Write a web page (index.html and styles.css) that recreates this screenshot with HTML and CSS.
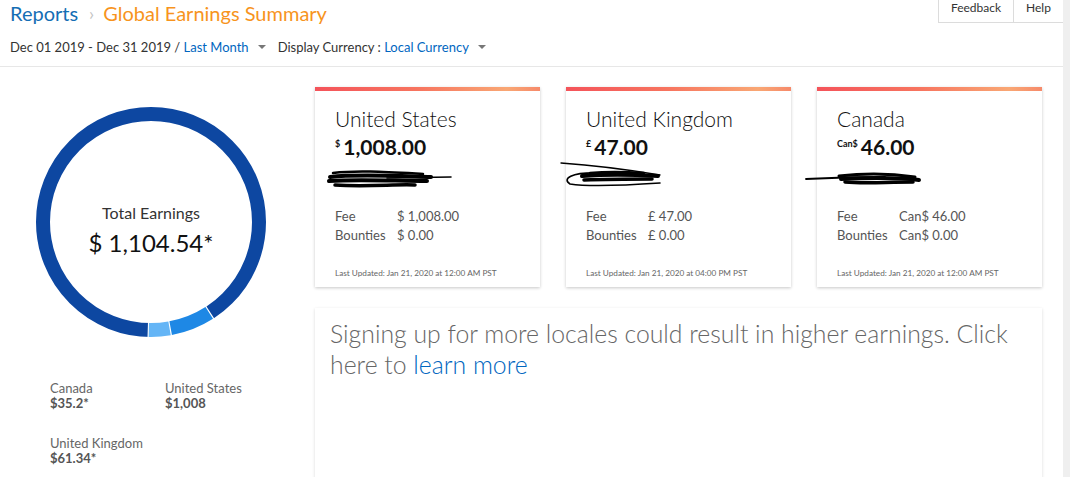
FILE: index.html
```html
<!DOCTYPE html>
<html>
  <head>
    <title>Global Earnings Summary</title>
    <link rel="stylesheet" href="styles.css">
  </head>
  <body>
    <div class="page">
      <header class="topbar">
        <div class="titles">
          <h1 class="crumbs">
            <a class="crumb-link" href="#">Reports</a>
            <span class="crumb-sep">&rsaquo;</span>
            <span class="crumb-current">Global Earnings Summary</span>
          </h1>
          <div class="filters">
            <span class="filter">Dec 01 2019 - Dec 31 2019 / <a href="#">Last Month</a><span class="caret"></span></span>
            <span class="filter">Display Currency : <a href="#">Local Currency</a><span class="caret"></span></span>
          </div>
        </div>
        <nav class="help-links">
          <a href="#">Feedback</a>
          <a href="#">Help</a>
        </nav>
      </header>

      <main class="content">
        <section class="summary">
          <div class="donut">
            <svg width="230" height="230" viewBox="0 0 230 230">
              <g transform="rotate(-90 115 115)" fill="none" stroke-width="14">
                <!-- US is the base ring, white cut for the small locales -->
                <circle cx="115" cy="115" r="108" stroke="#0d47a1" />
                <circle cx="115" cy="115" r="108" stroke="#fff" stroke-width="16" stroke-dasharray="66 700" stroke-dashoffset="-276.3" />
                <circle cx="115" cy="115" r="108" stroke="#1e88e5" stroke-dasharray="41.7 700" stroke-dashoffset="-277.5" />
                <circle cx="115" cy="115" r="108" stroke="#64b5f6" stroke-dasharray="20.9 700" stroke-dashoffset="-320.3" />
              </g>
            </svg>
            <div class="donut-label">
              <span class="donut-title">Total Earnings</span>
              <span class="donut-total">$ 1,104.54*</span>
            </div>
          </div>
          <ul class="legend">
            <li><span>Canada</span><b>$35.2*</b></li>
            <li><span>United States</span><b>$1,008</b></li>
            <li><span>United Kingdom</span><b>$61.34*</b></li>
          </ul>
        </section>

        <section class="locales">
          <div class="cards">
            <div class="card">
              <h2 class="card-title">United States</h2>
              <div class="card-amount"><sup>$</sup>1,008.00</div>
              <svg class="scribble" width="130" height="20" viewBox="0 0 130 20">
                <g fill="none" stroke="#000" stroke-linecap="round">
                  <path d="M6 4 C30 1, 60 3, 96 5" stroke-width="2.5" />
                  <path d="M3 8 C30 5, 70 7, 104 8" stroke-width="4" />
                  <path d="M2 12 C30 10, 70 12, 100 12" stroke-width="4" />
                  <path d="M8 16 C40 18, 70 15, 88 16" stroke-width="3.5" />
                  <path d="M60 9 L124 8" stroke-width="1.6" />
                </g>
              </svg>
              <dl class="card-rows">
                <dt>Fee</dt><dd>$ 1,008.00</dd>
                <dt>Bounties</dt><dd>$ 0.00</dd>
              </dl>
              <p class="card-updated">Last Updated: Jan 21, 2020 at 12:00 AM PST</p>
            </div>
            <div class="card">
              <h2 class="card-title">United Kingdom</h2>
              <div class="card-amount"><sup>&pound;</sup>47.00</div>
              <svg class="scribble scribble-uk" width="130" height="28" viewBox="0 0 130 28">
                <g fill="none" stroke="#000" stroke-linecap="round">
                  <path d="M1 2 C30 4, 70 9, 100 14" stroke-width="1.3" />
                  <path d="M40 12 C10 11, 2 18, 10 23 C30 26, 70 24, 100 22" stroke-width="1.6" />
                  <path d="M22 15 C50 13, 80 14, 98 15" stroke-width="4" />
                  <path d="M24 19 C50 18, 70 18, 92 18" stroke-width="3.5" />
                  <path d="M30 12 C50 10, 70 11, 84 12" stroke-width="2.5" />
                </g>
              </svg>
              <dl class="card-rows">
                <dt>Fee</dt><dd>&pound; 47.00</dd>
                <dt>Bounties</dt><dd>&pound; 0.00</dd>
              </dl>
              <p class="card-updated">Last Updated: Jan 21, 2020 at 04:00 PM PST</p>
            </div>
            <div class="card">
              <h2 class="card-title">Canada</h2>
              <div class="card-amount"><sup>Can$</sup>46.00</div>
              <svg class="scribble scribble-ca" width="130" height="20" viewBox="0 0 130 20">
                <g fill="none" stroke="#000" stroke-linecap="round">
                  <path d="M1 10 C20 9, 50 8, 80 8" stroke-width="1.8" />
                  <path d="M34 7 C60 4, 90 5, 110 8" stroke-width="3" />
                  <path d="M36 10 C60 9, 90 8, 114 11" stroke-width="4" />
                  <path d="M40 13 C60 15, 80 13, 108 13" stroke-width="3.5" />
                </g>
              </svg>
              <dl class="card-rows">
                <dt>Fee</dt><dd>Can$ 46.00</dd>
                <dt>Bounties</dt><dd>Can$ 0.00</dd>
              </dl>
              <p class="card-updated">Last Updated: Jan 21, 2020 at 12:00 AM PST</p>
            </div>
          </div>

          <div class="promo">
            <p>Signing up for more locales could result in higher earnings. Click here to <a href="#">learn more</a></p>
          </div>
        </section>
      </main>
    </div>
  </body>
</html>
```

FILE: styles.css
```css
body {
  margin: 0;
  font-family: Lato, "Liberation Sans", sans-serif;
  color: #333;
  background: #efefef;
}

a { text-decoration: none; color: #0066c0; }

.page {
  width: 1063px;
  min-height: 477px;
  background: #fff;
}

/* header */
.topbar {
  display: flex;
  justify-content: space-between;
  height: 66px;
  border-bottom: 1px solid #e7e7e7;
}

.titles { padding-left: 10px; }

.crumbs {
  margin: 0;
  padding-top: 1px;
  font-size: 20px;
  font-weight: normal;
  line-height: 24px;
  display: flex;
  align-items: center;
}
.crumb-link { color: #146eb4; }
.crumb-sep { color: #c4c4c4; margin: 0 9px 0 11px; font-size: 18px; }
.crumb-current { color: #f7941d; }

.filters {
  margin-top: 14px;
  font-size: 13px;
  line-height: 16px;
  display: flex;
  gap: 12px;
}
.filter { display: flex; align-items: center; white-space: pre; }
.caret {
  display: inline-block;
  margin-left: 9px;
  border-left: 4px solid transparent;
  border-right: 4px solid transparent;
  border-top: 4px solid #777;
}

.help-links { display: flex; align-self: flex-start; }
.help-links a {
  color: #333;
  font-size: 12px;
  line-height: 16px;
  padding: 0 10px 6px;
  border-left: 1px solid #dcdcdc;
  border-bottom: 1px solid #dcdcdc;
}
.help-links a:first-child { width: 54px; text-align: center; }
.help-links a:last-child { width: 29px; text-align: center; }

/* body */
.content { display: flex; padding-top: 20px; }

.summary { width: 315px; flex-shrink: 0; }

.donut {
  display: grid;
  width: 230px;
  height: 230px;
  margin: 20px 0 0 36px;
}
.donut svg, .donut-label { grid-area: 1 / 1; }
.donut-label {
  display: flex;
  flex-direction: column;
  align-items: center;
  justify-content: center;
  padding-top: 16px;
}
.donut-title { font-size: 16px; color: #333; line-height: 20px; }
.donut-total { font-size: 24px; color: #111; line-height: 30px; margin-top: 5px; }

.legend {
  list-style: none;
  margin: 44px 0 0 50px;
  padding: 0;
  display: grid;
  grid-template-columns: 115px 115px;
  row-gap: 25px;
  font-size: 13px;
  line-height: 15px;
  color: #666;
}
.legend li { display: flex; flex-direction: column; }
.legend b { color: #555; }

.locales { width: 727px; }

.cards { display: flex; gap: 26px; }

.card {
  width: 225px;
  height: 200px;
  box-sizing: border-box;
  padding: 16px 20px 0;
  border-top: 4px solid #f55a5a;
  border-image: linear-gradient(90deg, #f4535a, #f7745f 45%, #f9a774 85%, #f6896a) 1;
  box-shadow: 0 1px 3px rgba(0, 0, 0, 0.22);
  background: #fff;
}

.card-title {
  margin: 0;
  font-size: 21px;
  font-weight: 300;
  line-height: 24px;
  color: #111;
}
.card-amount {
  margin-top: 1px;
  font-size: 21px;
  font-weight: bold;
  line-height: 24px;
  color: #111;
}
.card-amount sup { font-size: 9px; vertical-align: 8px; margin-right: 3px; }

.scribble { display: block; margin: 10px 0 0 -8px; }
.scribble-uk { margin: 2px 0 0 -26px; }
.scribble-ca { margin-left: -32px; }

.card-rows {
  display: grid;
  grid-template-columns: 62px auto;
  margin: 18px 0 0;
  font-size: 13px;
  line-height: 19px;
  color: #555;
}
.card-rows dd { margin: 0; }

.card-updated {
  margin: 23px 0 0;
  font-size: 8.2px;
  color: #666;
}

.promo {
  margin-top: 21px;
  height: 200px;
  padding: 10px 15px;
  box-shadow: 0 1px 3px rgba(0, 0, 0, 0.15);
}
.promo p {
  margin: 0;
  font-size: 24.8px;
  font-weight: 300;
  line-height: 31px;
  color: #666;
}
```
